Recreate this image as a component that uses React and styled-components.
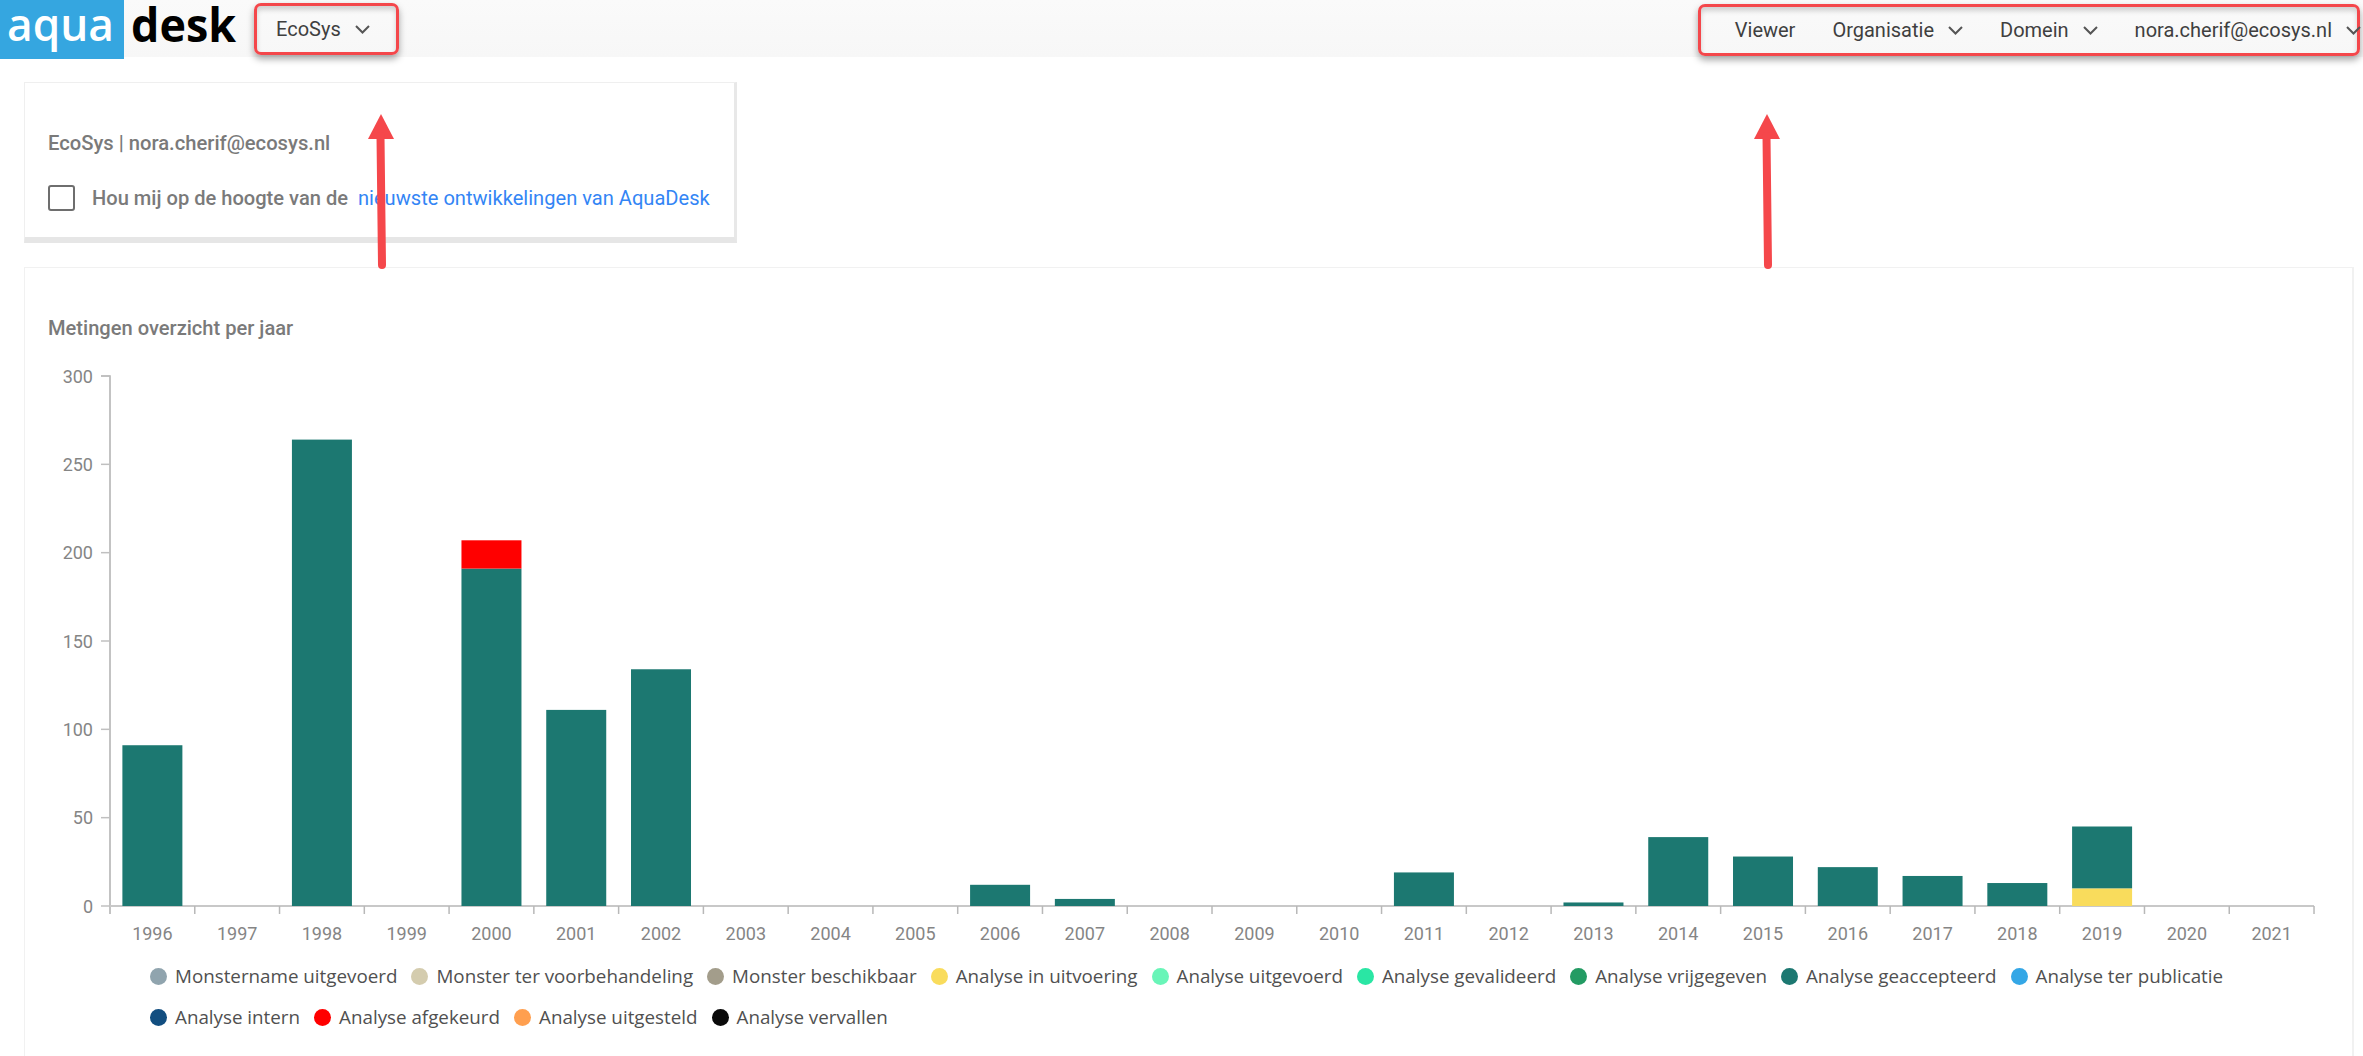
import React from "react";
import styled, { createGlobalStyle } from "styled-components";

const Global = createGlobalStyle`
  html, body { margin: 0; padding: 0; height: 100%; overflow: hidden; background: #fff; }
  body { font-family: Roboto, "Liberation Sans", sans-serif; }
  * { box-sizing: border-box; }
`;
const Page = styled.div`position: relative; width: 2363px; height: 1056px; overflow: hidden; background: #fff;`;
const Header = styled.header`
  display: flex; align-items: center; justify-content: space-between;
  height: 57px; padding-right: 3px;
  background: linear-gradient(180deg, #fafafa, #f7f7f7);
`;
const Left = styled.div`display: flex; align-items: flex-start; height: 100%;`;
const LogoSvg = styled.svg`display: block; flex: none; position: relative; z-index: 1;`;
const Highlight = styled.nav`
  display: flex; align-items: center; height: 52px; margin-top: 3px;
  padding: ${p => p.$pad};
  gap: ${p => p.$gap || 0}px;
  border: 3px solid #f4474b; border-radius: 7px;
  box-shadow: 0 4px 7px rgba(0,0,0,.35), inset 0 4px 5px rgba(0,0,0,.16);
`;
const NavItem = styled.div`
  display: flex; align-items: center; gap: ${p => p.$chev ? 14 : 0}px;
  margin-right: ${p => p.$overhang || 0}px;
  font-size: 20px; color: #3f3f3f; white-space: nowrap;
`;
const Chev = () => (
  <svg width="15" height="9" viewBox="0 0 15 9" fill="none" stroke="#555" strokeWidth="2"><path d="M1 1l6.5 6.5L14 1" /></svg>
);
const Main = styled.main`display: flex; flex-direction: column; gap: 24px; padding: 25px 9px 0 24px;`;
const InfoCard = styled.section`
  width: 713px; height: 161px; padding: 48px 23px 0;
  border: 1px solid #efefef; border-right: 3px solid #e8e8e8; border-bottom: 6px solid #e6e6e6;
`;
const InfoLine = styled.div`font-size: 20.2px; font-weight: 500; line-height: 24px; color: #7a7a7a;`;
const CheckRow = styled.label`display: flex; align-items: center; margin-top: 30px; font-size: 20.1px; font-weight: 500; color: #7a7a7a;`;
const Box = styled.span`width: 27px; height: 26px; border: 2px solid #6e6e6e; border-radius: 3px; margin-right: 17px; flex: none;`;
const Link = styled.a`color: #3385f5; margin-left: 10px; font-weight: 400;`;
const ChartCard = styled.section`
  height: 800px; padding: 48px 0 0 23px;
  border: 1px solid #f1f1f1; border-right-width: 2px; border-bottom: none;
`;
const ChartTitle = styled.h2`margin: 0; font-size: 20.1px; font-weight: 500; line-height: 24px; color: #7a7a7a;`;
const ChartSvg = styled.svg`display: block; margin: -7px 0 0 -24px;`;
const Legend = styled.ul`
  display: flex; flex-wrap: wrap; gap: 21px 14px; list-style: none; width: 2150px;
  margin: 15px 0 0 102px; padding: 0;
`;
const LegendItem = styled.li`
  display: flex; align-items: center; gap: 8px; height: 20px;
  font: 400 18.8px/20px "Open Sans", sans-serif; color: #505050; white-space: nowrap;
`;
const Dot = styled.span`width: 17px; height: 17px; border-radius: 50%; background: ${p => p.$c}; flex: none;`;
const Arrow = styled.svg`position: absolute; top: 110px; left: ${p => p.$x}px; pointer-events: none;`;

const years = Array.from({ length: 26 }, (_, i) => 1996 + i);
const data = {
  1996: [91], 1998: [264], 2000: [191, 16, "#ff0000"], 2001: [111], 2002: [134], 2006: [12], 2007: [4],
  2011: [19], 2013: [2], 2014: [39], 2015: [28], 2016: [22], 2017: [17], 2018: [13],
};
const legend = [
  ["Monstername uitgevoerd", "#90a4ae"], ["Monster ter voorbehandeling", "#d4ccae"], ["Monster beschikbaar", "#a39d8b"],
  ["Analyse in uitvoering", "#f9dc5c"], ["Analyse uitgevoerd", "#69f5b8"], ["Analyse gevalideerd", "#2ae6a4"],
  ["Analyse vrijgegeven", "#239b63"], ["Analyse geaccepteerd", "#1c7871"], ["Analyse ter publicatie", "#34a7e6"],
  ["Analyse intern", "#124e80"], ["Analyse afgekeurd", "#ff0000"], ["Analyse uitgesteld", "#ff9f4f"], ["Analyse vervallen", "#0a0a0a"],
];
const X0 = 86, Y0 = 573, STEP = 84.77, U = 530 / 300, TEAL = "#1c7871";
const axisText = { fontFamily: "Roboto, sans-serif", fontSize: 18, fill: "#858585" };

function Chart() {
  return (
    <ChartSvg width="2300" height="618" viewBox="0 0 2300 618">
      <path d={`M${X0 - 9} ${Y0 - 530}H${X0}V${Y0 + 8}`} fill="none" stroke="#b0b0b0" strokeWidth="1.5" />
      {[0, 50, 100, 150, 200, 250, 300].map(v => {
        const y = Y0 - v * U;
        return (
          <g key={v}>
            <line x1={X0 - 9} x2={X0} y1={y} y2={y} stroke="#c0c0c0" strokeWidth="1.5" />
            <text x={X0 - 17} y={y + 6.5} textAnchor="end" {...axisText}>{v}</text>
          </g>
        );
      })}
      <line x1={X0} x2={X0 + STEP * 26} y1={Y0} y2={Y0} stroke="#c8c8c8" strokeWidth="2" />
      {years.map((yr, i) => {
        const cx = X0 + STEP * (i + 0.5);
        const d = data[yr];
        return (
          <g key={yr}>
            <line x1={X0 + STEP * (i + 1)} x2={X0 + STEP * (i + 1)} y1={Y0} y2={Y0 + 8} stroke="#b8b8b8" strokeWidth="1.5" />
            <text x={cx} y={Y0 + 34} textAnchor="middle" {...axisText}>{yr}</text>
            {d && <rect x={cx - 30} y={Y0 - d[0] * U} width="60" height={d[0] * U} fill={TEAL} />}
            {d && d[1] && <rect x={cx - 30} y={Y0 - (d[0] + d[1]) * U} width="60" height={d[1] * U} fill={d[2]} />}
            {yr === 2019 && <>
              <rect x={cx - 30} y={Y0 - 10 * U} width="60" height={10 * U} fill="#f9dc5c" />
              <rect x={cx - 30} y={Y0 - 45 * U} width="60" height={35 * U} fill={TEAL} />
            </>}
          </g>
        );
      })}
    </ChartSvg>
  );
}

const Logo = () => (
  <LogoSvg width="254" height="59" viewBox="0 0 254 59">
    <rect width="124" height="59" fill="#35a6e0" />
    <text x="7" y="41" fontFamily="'Open Sans', sans-serif" fontWeight="600" fontSize="46" fill="#fff" textLength="107" lengthAdjust="spacingAndGlyphs">aqua</text>
    <text x="131" y="42" fontFamily="'Open Sans', sans-serif" fontWeight="700" fontSize="47" fill="#000" textLength="105" lengthAdjust="spacingAndGlyphs">desk</text>
  </LogoSvg>
);

const RedArrow = ({ x }) => (
  <Arrow $x={x} width="30" height="160" viewBox="0 0 30 160">
    <path d="M15 4L28 29H2Z" fill="#f5474b" />
    <path d="M14.5 26L16 155" stroke="#f5474b" strokeWidth="8" strokeLinecap="round" fill="none" />
  </Arrow>
);

export default function App() {
  return (
    <Page>
      <Global />
      <Header>
        <Left>
          <Logo />
          <Highlight $pad="0 26px 0 19px">
            <NavItem $chev>EcoSys <Chev /></NavItem>
          </Highlight>
        </Left>
        <Highlight $pad="0 0 0 34px" $gap={37}>
          <NavItem>Viewer</NavItem>
          <NavItem $chev>Organisatie <Chev /></NavItem>
          <NavItem $chev>Domein <Chev /></NavItem>
          <NavItem $chev $overhang={-4}>nora.cherif@ecosys.nl <Chev /></NavItem>
        </Highlight>
      </Header>
      <Main>
        <InfoCard>
          <InfoLine>EcoSys | nora.cherif@ecosys.nl</InfoLine>
          <CheckRow><Box />Hou mij op de hoogte van de <Link>nieuwste ontwikkelingen van AquaDesk</Link></CheckRow>
        </InfoCard>
        <ChartCard>
          <ChartTitle>Metingen overzicht per jaar</ChartTitle>
          <Chart />
          <Legend>
            {legend.map(([t, c]) => <LegendItem key={t}><Dot $c={c} />{t}</LegendItem>)}
          </Legend>
        </ChartCard>
      </Main>
      <RedArrow x={366} />
      <RedArrow x={1752} />
    </Page>
  );
}
